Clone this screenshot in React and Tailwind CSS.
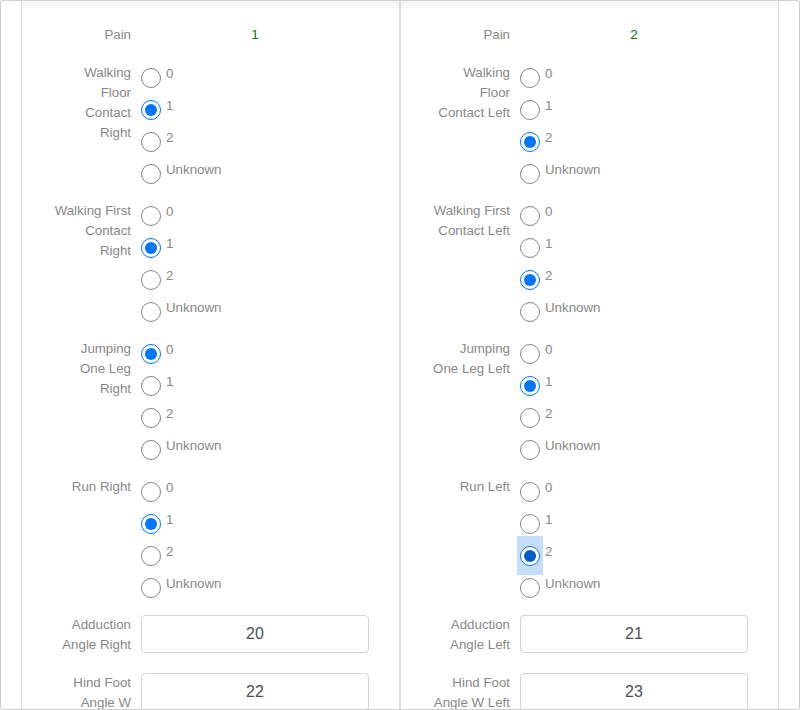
import React from "react";

const sides = [
  {
    pain: "1",
    groups: [
      { label: "Walking Floor Contact Right", value: 1 },
      { label: "Walking First Contact Right", value: 1 },
      { label: "Jumping One Leg Right", value: 0 },
      { label: "Run Right", value: 1 },
    ],
    inputs: [
      { label: "Adduction Angle Right", value: "20" },
      { label: "Hind Foot Angle W Right", value: "22" },
    ],
  },
  {
    pain: "2",
    groups: [
      { label: "Walking Floor Contact Left", value: 2 },
      { label: "Walking First Contact Left", value: 2 },
      { label: "Jumping One Leg Left", value: 1 },
      { label: "Run Left", value: 2, focused: true },
    ],
    inputs: [
      { label: "Adduction Angle Left", value: "21" },
      { label: "Hind Foot Angle W Left", value: "23" },
    ],
  },
];

const options = ["0", "1", "2", "Unknown"];

const Radio = ({ checked, focused }) => {
  if (!checked) {
    return (
      <span className="block w-5 h-5 rounded-full border border-[#858585] bg-white flex-shrink-0" />
    );
  }
  return (
    <span className="relative block w-5 h-5 flex-shrink-0">
      {focused && (
        <span className="absolute -left-[3px] -right-[3px] -top-[10px] -bottom-[9px] bg-[#c4defc]" />
      )}
      <span
        className={`relative flex items-center justify-center w-5 h-5 rounded-full border-[1.5px] bg-white ${
          focused ? "border-[#1a6fd9]" : "border-[#0075ff]"
        }`}
      >
        <span
          className={`block w-[12px] h-[12px] rounded-full ${
            focused ? "bg-[#005cc8]" : "bg-[#0075ff]"
          }`}
        />
      </span>
    </span>
  );
};

const Label = ({ children }) => (
  <div className="w-[77px] ml-[32px] text-right text-[13.3px] leading-5 text-[#888888] flex-shrink-0">
    {children}
  </div>
);

const Panel = ({ side }) => (
  <div className="w-[379px] border-x border-[#dcdcdc] flex-shrink-0">
    <div className="h-[7px] bg-[#f7f7f7]" />
    <div className="pt-[17px]">
      {/* Pain */}
      <div className="flex h-[28px] mb-[10px]">
        <Label>Pain</Label>
        <div className="ml-[10px] w-[228px] text-center text-[13.3px] leading-5 text-[#008000]">
          {side.pain}
        </div>
      </div>

      {/* Radio groups */}
      {side.groups.map((group) => (
        <div key={group.label} className="flex mb-[10px]">
          <Label>{group.label}</Label>
          <div className="ml-[10px]">
            {options.map((opt, i) => (
              <div key={opt} className="flex items-start h-8">
                <span className="mt-[5px]">
                  <Radio
                    checked={group.value === i}
                    focused={group.focused && group.value === i}
                  />
                </span>
                <span className="ml-[5px] pt-[1px] text-[13.3px] leading-5 text-[#888888]">
                  {opt}
                </span>
              </div>
            ))}
          </div>
        </div>
      ))}

      {/* Number inputs */}
      {side.inputs.map((inp) => (
        <div key={inp.label} className="flex h-[38px] mb-5">
          <Label>{inp.label}</Label>
          <input
            readOnly
            value={inp.value}
            className="ml-[10px] w-[228px] h-[38px] border border-[#ced4da] rounded-[4px] text-center text-[16px] text-[#495057] bg-white outline-none"
          />
        </div>
      ))}
    </div>
  </div>
);

export default function App() {
  return (
    <div className="w-[800px] h-[710px] overflow-hidden border border-[#cfcfcf] rounded-[2px] bg-white font-['Liberation_Sans',Arial,sans-serif]">
      <div className="flex px-5 h-full">
        {sides.map((side, i) => (
          <Panel key={i} side={side} />
        ))}
      </div>
    </div>
  );
}
